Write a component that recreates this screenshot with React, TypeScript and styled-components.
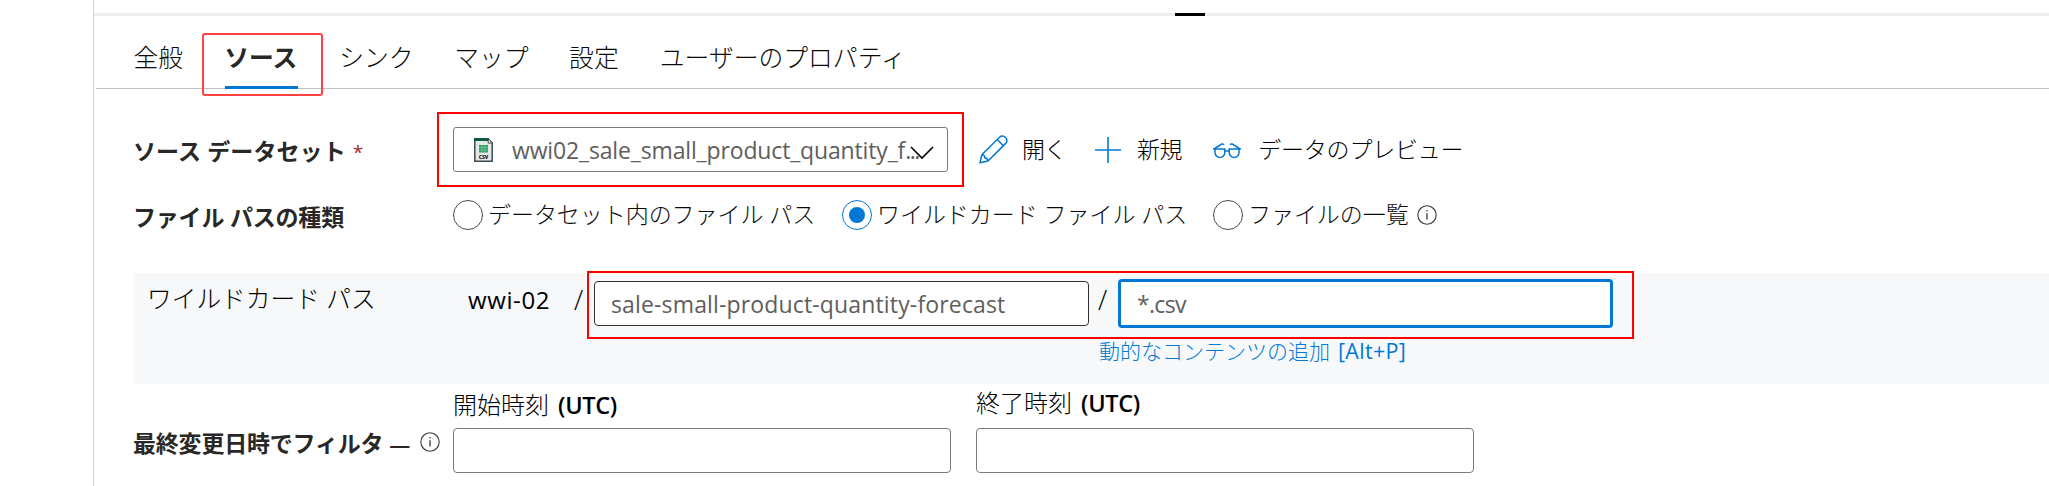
import React from "react";
import styled, { createGlobalStyle, css } from "styled-components";

const Global = createGlobalStyle`
  * { box-sizing: border-box; }
  body { margin: 0; background: #fff; overflow: hidden; }
`;

const Page = styled.div`
  width: 2049px;
  height: 486px;
  padding-left: 93px;
  overflow: hidden;
  color: #0c0b0a;
  font-family: "Open Sans", "Noto Sans CJK JP", sans-serif;
  font-size: 23px;
  font-weight: 300;
  white-space: nowrap;
`;

const Pane = styled.main`
  height: 486px;
  padding-top: 13px;
  border-left: 1px solid #d2d2d2;
`;

const Splitter = styled.div`
  display: flex;
  height: 3px;
  padding-left: 1081px;
  background: #ededed;
`;

const Handle = styled.span`
  width: 30px;
  height: 3px;
  background: #000;
`;

const Tabs = styled.nav`
  display: flex;
  gap: 42px;
  height: 73px;
  margin-left: 2px;
  padding-left: 38px;
  border-bottom: 1px solid #c2c2c2;
`;

const Tab = styled.div<{ $chars: number; $active?: boolean }>`
  position: relative;
  width: ${(p) => p.$chars * 24.33}px;
  height: 73px;
  font-size: 24.8px;
  & > span {
    display: block;
    height: 70px;
    margin: -1px 0 0 -0.5px;
    line-height: 84px;
  }
  ${(p) =>
    p.$active &&
    css`
      color: #292827;
      font-weight: 700;
      border-bottom: 3px solid #0078d4;
    `}
`;

const Mark = styled.i<{ $inset: string; $color?: string; $radius?: number }>`
  position: absolute;
  inset: ${(p) => p.$inset};
  border: 2px solid ${(p) => p.$color ?? "#ff0000"};
  border-radius: ${(p) => p.$radius ?? 0}px;
  pointer-events: none;
`;

const Form = styled.section`
  padding: 23px 0 0 40px;
`;

const Row = styled.div<{ $height: number }>`
  display: flex;
  align-items: center;
  height: ${(p) => p.$height}px;
`;

const Label = styled.label<{ $top?: number; $pitch?: number }>`
  display: flex;
  align-items: center;
  width: 320px;
  margin-left: -1px;
  padding-top: ${(p) => p.$top ?? 0}px;
  color: #292827;
  font-weight: 700;
  letter-spacing: ${(p) => p.$pitch ?? -0.2}px;
`;

const Required = styled.span`
  margin-left: 7px;
  padding-top: 5px;
  color: #a4262c;
  font-size: 19px;
  font-weight: 400;
`;

const Select = styled.div`
  position: relative;
  display: flex;
  align-items: center;
  width: 495px;
  height: 45px;
  padding-left: 20px;
  border: 1px solid #7a7a7a;
  border-radius: 3px;
`;

const SelectText = styled.span`
  flex: 1;
  margin-left: 19px;
  color: #605e5c;
  font-size: 23px;
  font-weight: 400;
  letter-spacing: -0.15px;
`;

const Ellipsis = styled.span`
  letter-spacing: -1.5px;
`;

const Chevron = styled.svg`
  position: absolute;
  right: 13px;
  top: 17px;
`;

const Action = styled.button<{ $left: number; $gap: number; $spacing?: number }>`
  display: flex;
  align-items: center;
  gap: ${(p) => p.$gap}px;
  height: 40px;
  margin-left: ${(p) => p.$left}px;
  padding: 0;
  border: 0;
  background: none;
  color: #000;
  font: inherit;
  letter-spacing: ${(p) => p.$spacing ?? -0.2}px;
  line-height: 32px;
  & > span { margin-top: -1px; }
`;

const Option = styled.label<{ $width: number }>`
  display: flex;
  align-items: center;
  gap: 5px;
  width: ${(p) => p.$width}px;
  line-height: 30px;
  letter-spacing: -0.05px;
  & > b { margin-top: -2px; font-weight: 300; }
`;

const Radio = styled.span<{ $checked?: boolean }>`
  display: grid;
  place-items: center;
  flex: none;
  width: 30px;
  height: 30px;
  border: 1px solid ${(p) => (p.$checked ? "#0078d4" : "#4a4a4a")};
  border-radius: 50%;
  &::after {
    content: "";
    width: 16px;
    height: 16px;
    border-radius: 50%;
    background: ${(p) => (p.$checked ? "#0078d4" : "transparent")};
  }
`;

const Wildcard = styled.div`
  display: flex;
  height: 111px;
  margin-top: 31px;
  padding-left: 13px;
  background: #f6f8fa;
  color: #000;
`;

const WildLabel = styled.div`
  width: 321px;
  padding-top: 8px;
  font-size: 24.7px;
  line-height: 36px;
`;

const Container = styled.div`
  width: 106px;
  padding-top: 9px;
  font-size: 24px;
  font-weight: 400;
  letter-spacing: 0.6px;
  line-height: 36px;
`;

const Slash = styled.div<{ $width: number; $left?: number }>`
  width: ${(p) => p.$width}px;
  padding: 9px 0 0 ${(p) => p.$left ?? 0}px;
  font-size: 27px;
  line-height: 36px;
`;

const Paths = styled.div`
  position: relative;
  display: flex;
`;

const Input = styled.div<{ $focused?: boolean }>`
  width: 495px;
  height: ${(p) => (p.$focused ? 49 : 45)}px;
  margin-top: ${(p) => (p.$focused ? 6 : 8)}px;
  padding-left: 16px;
  border: ${(p) => (p.$focused ? "3px solid #0078d4" : "1px solid #323130")};
  border-radius: 4px;
  background: #fff;
  color: #605e5c;
  font-weight: 400;
  letter-spacing: ${(p) => (p.$focused ? -0.7 : 0.15)}px;
  line-height: 45px;
`;

const LastPath = styled.div`
  width: 495px;
`;

const DynamicLink = styled.a`
  display: block;
  margin: 8px 0 0 -19px;
  color: #0078d4;
  font-size: 21px;
  line-height: 30px;
`;

const LinkKeys = styled.span`
  margin-left: 8px;
  font-size: 21.5px;
  font-weight: 400;
  letter-spacing: 0.3px;
`;

const Times = styled.div`
  display: flex;
  height: 102px;
`;

const Dash = styled.span`
  margin: 6px 10px 0 6px;
  font-size: 21px;
  font-weight: 600;
`;

const TimeField = styled.div<{ $lift?: number }>`
  width: 498px;
  margin-right: 25px;
  padding-top: ${(p) => 4 - (p.$lift ?? 0)}px;
  color: #000;
  font-size: 24px;
  line-height: 34px;
`;

const Utc = styled.span`
  margin-left: 9px;
  font-size: 23.5px;
  font-weight: 600;
  letter-spacing: -0.3px;
`;

const TimeInput = styled.div<{ $lift?: number }>`
  height: 45px;
  margin-top: ${(p) => 6 + (p.$lift ?? 0)}px;
  border: 1px solid #7a7a7a;
  border-radius: 4px;
`;

const InfoIcon = () => (
  <svg width="20" height="20" viewBox="0 0 20 20" fill="none" stroke="#3b3a39">
    <circle cx="10" cy="10" r="9.2" strokeWidth="1.1" />
    <path d="M10 8.3v6.2" strokeWidth="1.3" />
    <circle cx="10" cy="5.8" r=".8" fill="#3b3a39" stroke="none" />
  </svg>
);

const CsvIcon = () => (
  <svg width="19" height="24" viewBox="0 0 19 24">
    <path d="M.8.8h13.4L18.2 5v18.2H.8z" fill="#e6e7e8" stroke="#3b4a54" strokeWidth="1.5" />
    <path d="M0 0h14.5v3H0z" fill="#0d5a3b" />
    <path d="M14.2.6V5h4.2z" fill="#fff" stroke="#3b4a54" />
    <path d="M5 7h9v7.500H5z" fill="#2f9e63" />
    <path d="M5 9.500h9M5 12h9M8 7v7.500M11 7v7.500" stroke="#8ed0ab" strokeWidth=".6" />
    <text x="9.5" y="20.8" textAnchor="middle" fontFamily="Open Sans, sans-serif" fontSize="5" fontWeight="800" fill="#222">CSV</text>
  </svg>
);

const PencilIcon = () => (
  <svg width="29" height="29" viewBox="0 0 29 29" fill="none" stroke="#0078d4" strokeWidth="1.5" strokeLinejoin="round">
    <path d="M1 27.800l1.800-8L20.500 2.200a4.400 4.400 0 0 1 6.200 6.200L9 26z" />
    <path d="M18.200 4.500l6.200 6.200M2.800 19.800q3 0 3.100 3.100q3 .1 3.100 3.100" />
  </svg>
);

const PlusIcon = () => (
  <svg width="26" height="26" viewBox="0 0 26 26" stroke="#0078d4" strokeWidth="1.6">
    <path d="M0 13h26M13 0v26" />
  </svg>
);

const GlassesIcon = () => (
  <svg width="28" height="20" viewBox="0 -3 28 20" fill="none" stroke="#0078d4" strokeWidth="1.5">
    <path d="M0 6h12.500M15.500 6H28" />
    <path d="M2 6v3.500a4.900 4.900 0 0 0 9.800 0V6M16.200 6v3.500a4.900 4.900 0 0 0 9.800 0V6" />
    <path d="M11.800 8h4.400M1 6L9 .8l2.300.8M27 6L19 .8l-2.300.8" />
  </svg>
);

export default function App() {
  return (
    <Page>
      <Global />
      <Pane>
        <Splitter><Handle /></Splitter>
        <Tabs>
          <Tab $chars={2}><span>全般</span></Tab>
          <Tab $chars={3} $active>
            <span>ソース</span>
            <Mark $inset="17px -25px -10px -23px" $color="#ff4343" $radius={3} />
          </Tab>
          <Tab $chars={3}><span>シンク</span></Tab>
          <Tab $chars={3}><span>マップ</span></Tab>
          <Tab $chars={2}><span>設定</span></Tab>
          <Tab $chars={10}><span>ユーザーのプロパティ</span></Tab>
        </Tabs>
        <Form>
          <Row $height={75}>
            <Label $pitch={0.1}>ソース データセット<Required>*</Required></Label>
            <Select>
              <CsvIcon />
              <SelectText>wwi02_sale_small_product_quantity_f<Ellipsis>...</Ellipsis></SelectText>
              <Chevron width="24" height="15" viewBox="0 0 24 15" fill="none" stroke="#000" strokeWidth="1.6">
                <path d="M1 2l11 11L23 2" />
              </Chevron>
              <Mark $inset="-16px -17px -16px -17px" />
            </Select>
            <Action $left={31} $gap={14} $spacing={-1}><PencilIcon /><span>開く</span></Action>
            <Action $left={29} $gap={16} $spacing={-0.4}><PlusIcon /><span>新規</span></Action>
            <Action $left={31} $gap={17}><GlassesIcon /><span>データのプレビュー</span></Action>
          </Row>
          <Row $height={55}>
            <Label $top={2}>ファイル パスの種類</Label>
            <Option $width={389}><Radio /><b>データセット内のファイル パス</b></Option>
            <Option $width={371}><Radio $checked /><b>ワイルドカード ファイル パス</b></Option>
            <Option $width={204}><Radio /><b>ファイルの一覧</b></Option>
            <InfoIcon />
          </Row>
          <Wildcard>
            <WildLabel>ワイルドカード パス</WildLabel>
            <Container>wwi-02</Container>
            <Slash $width={20}>/</Slash>
            <Paths>
              <Mark $inset="-2px -21px 45px -7px" />
              <Input>sale-small-product-quantity-forecast</Input>
              <Slash $width={29} $left={9}>/</Slash>
              <LastPath>
                <Input $focused>*.csv</Input>
                <DynamicLink>動的なコンテンツの追加<LinkKeys>[Alt+P]</LinkKeys></DynamicLink>
              </LastPath>
            </Paths>
          </Wildcard>
          <Times>
            <Label $top={14}>最終変更日時でフィルタ<Dash>—</Dash><InfoIcon /></Label>
            <TimeField>開始時刻<Utc>(UTC)</Utc><TimeInput /></TimeField>
            <TimeField $lift={2}>終了時刻<Utc>(UTC)</Utc><TimeInput $lift={2} /></TimeField>
          </Times>
        </Form>
      </Pane>
    </Page>
  );
}
